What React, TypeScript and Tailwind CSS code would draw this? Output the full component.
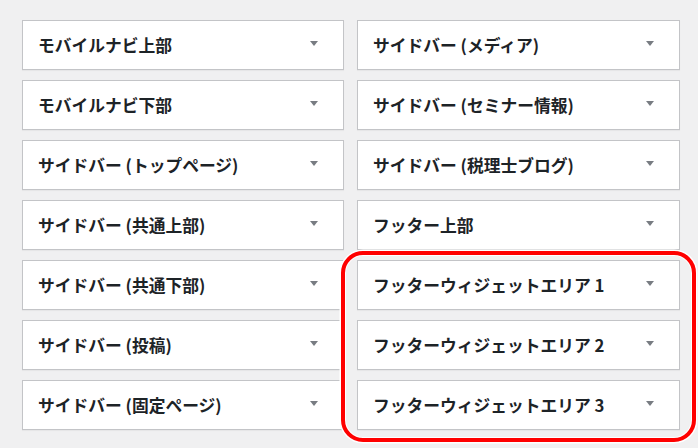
import React from "react";

const left = [
  "モバイルナビ上部",
  "モバイルナビ下部",
  "サイドバー (トップページ)",
  "サイドバー (共通上部)",
  "サイドバー (共通下部)",
  "サイドバー (投稿)",
  "サイドバー (固定ページ)",
];
const right = [
  "サイドバー (メディア)",
  "サイドバー (セミナー情報)",
  "サイドバー (税理士ブログ)",
  "フッター上部",
  "フッターウィジェットエリア 1",
  "フッターウィジェットエリア 2",
  "フッターウィジェットエリア 3",
];

function Box({ title }: { title: string }) {
  return (
    <div className="flex h-[50px] items-center justify-between border border-[#c3c4c7] bg-white pl-[15px] pr-[25px] shadow-[0_1px_1px_rgba(0,0,0,0.04)]">
      <span
        className="text-[16.75px] font-bold leading-none text-[#1d2327] whitespace-nowrap"
        style={{ fontFamily: '"Noto Sans CJK JP", "Noto Sans", sans-serif' }}
      >
        {title}
      </span>
      <svg width="8" height="5" viewBox="0 0 8 5" className="mb-[3px]">
        <path d="M0 0 L8 0 L4 5 Z" fill="#787c82" />
      </svg>
    </div>
  );
}

export default function App() {
  return (
    <div className="relative h-[448px] w-[698px] overflow-hidden bg-[#f0f0f1]">
      <div className="grid grid-cols-[322px_323px] gap-x-[13px] pl-[22px] pt-[20px]">
        <div className="flex flex-col gap-[10px]">
          {left.map((t) => (
            <Box key={t} title={t} />
          ))}
        </div>
        <div className="flex flex-col gap-[10px]">
          {right.map((t) => (
            <Box key={t} title={t} />
          ))}
        </div>
      </div>
      <div className="pointer-events-none absolute left-[341px] top-[251px] h-[191px] w-[355px] rounded-[22px] border-[4px] border-[#ff0000] shadow-[0_0_0_1.5px_#ffffff,inset_0_0_0_1px_#ffffff]" />
    </div>
  );
}
